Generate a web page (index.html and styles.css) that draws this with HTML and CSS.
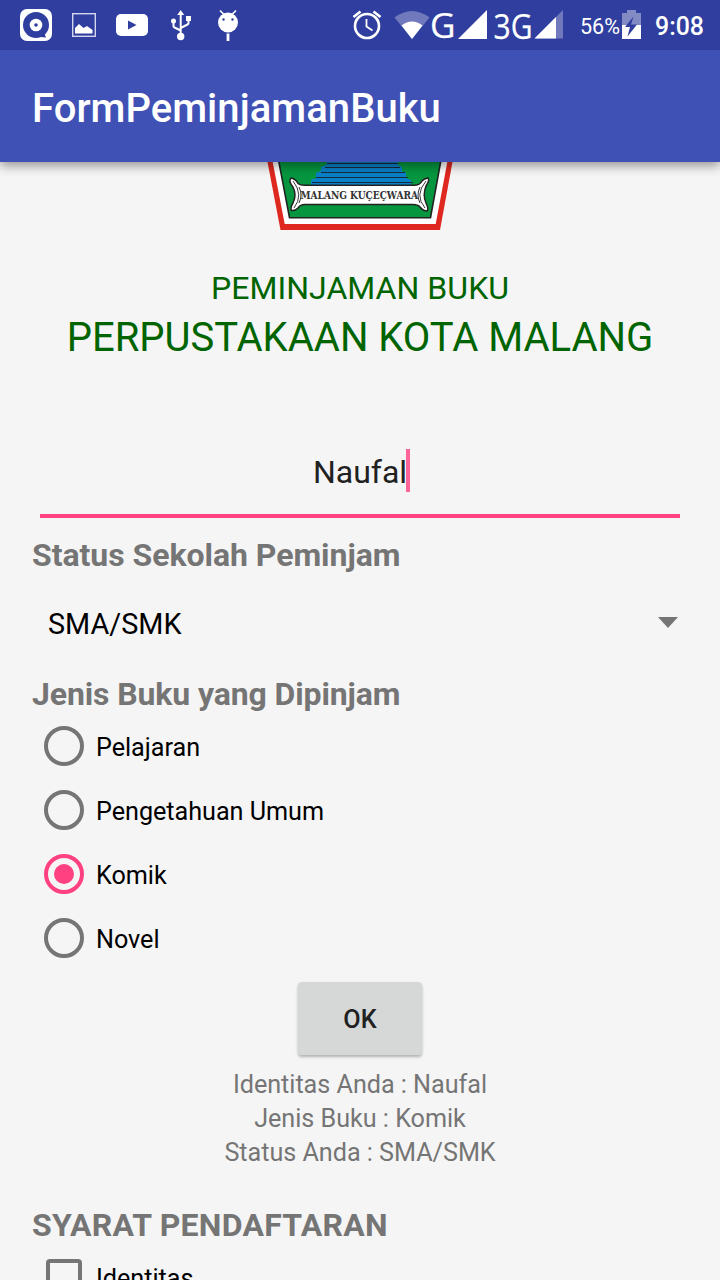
FILE: index.html
```html
<!DOCTYPE html>
<html lang="id">
<head>
<meta charset="utf-8">
<title>FormPeminjamanBuku</title>
<link rel="stylesheet" href="styles.css">
</head>
<body>
<div class="screen">
  <header class="status-bar">
    <svg class="status-left" width="250" height="50" viewBox="0 0 250 50">
      <rect x="20" y="9" width="32" height="32" rx="7" fill="#fff"/>
      <circle cx="36" cy="25" r="13" fill="#303f9f"/>
      <path d="M40 37l6 .5-2-5z" fill="#303f9f"/>
      <circle cx="36" cy="25" r="6.3" fill="#fff"/>
      <circle cx="36" cy="25" r="1.8" fill="#303f9f"/>
      <rect x="72.7" y="13.7" width="22.6" height="22.6" fill="none" stroke="#d3d6ed" stroke-width="1.4"/>
      <path d="M75 33.500V28l4-4 4.500 4 3.500-2 5.500 4v3.500z" fill="#fff"/>
      <rect x="116" y="14" width="32" height="22" rx="5" fill="#fff"/>
      <path d="M128 20.500v9l8.500-4.500z" fill="#303f9f"/>
      <g stroke="#fff" stroke-width="2" fill="none">
        <path d="M180.700 35V14M173.500 21v5q0 1 1 1.500l6.200 3M188.500 19v4q0 1-1 1.500l-6.800 3.500"/>
      </g>
      <path d="M180.700 10l3.500 5h-7z" fill="#fff"/>
      <circle cx="180.700" cy="36.500" r="3.700" fill="#fff"/>
      <circle cx="173.500" cy="21" r="2.500" fill="#fff"/>
      <rect x="186" y="16" width="5" height="5" fill="#fff"/>
      <path d="M220 10.500l4 4M236 10.500l-4 4" stroke="#fff" stroke-width="1.600"/>
      <circle cx="228" cy="22.500" r="10" fill="#fff"/>
      <circle cx="223.500" cy="19.500" r="1.200" fill="#303f9f"/>
      <circle cx="232.500" cy="19.500" r="1.200" fill="#303f9f"/>
      <path d="M228 33.500V41" stroke="#fff" stroke-width="2.800"/>
    </svg>
    <svg class="status-right" width="370" height="50" viewBox="350 0 370 50">
      <circle cx="367" cy="26" r="12" fill="none" stroke="#fff" stroke-width="2.600"/>
      <path d="M366.500 19v7.500l6 4" fill="none" stroke="#fff" stroke-width="1.800"/>
      <path d="M353.500 17l7-5.500M380.500 17l-7-5.500" stroke="#fff" stroke-width="2.600"/>
      <path d="M394.500 17.500Q412 4.500 429.500 17.500L412 39z" fill="#7079bc"/>
      <path d="M401.500 25.500Q412 17.500 422.500 25.500L412 39z" fill="#fff"/>
      <text class="net" x="430" y="38" textLength="25.500" lengthAdjust="spacingAndGlyphs">G</text>
      <path d="M458 39L487 10V39z" fill="#fff"/>
      <text class="net" x="493.500" y="39" textLength="39" lengthAdjust="spacingAndGlyphs">3G</text>
      <path d="M534.500 38.500L563 10V38.500z" fill="#7079bc"/>
      <path d="M534.500 38.500L556 17V38.500z" fill="#fff"/>
      <text class="percent" x="580" y="34" textLength="40" lengthAdjust="spacingAndGlyphs">56%</text>
      <path d="M622 13h5v-3h9v3h5v12h-19z" fill="#838bc5"/>
      <path d="M622 25h19v14h-19z" fill="#fff"/>
      <path d="M633.500 16.500L625 27h5l-2.500 9.500 9.500-12h-6z" fill="#303f9f"/>
      <text class="clock" x="655" y="35" textLength="49" lengthAdjust="spacingAndGlyphs">9:08</text>
    </svg>
  </header>
  <div class="app-bar"><h1 class="app-title">FormPeminjamanBuku</h1></div>
  <main class="form">
    <svg class="crest" width="200" height="68" viewBox="260 162 200 68">
      <path d="M267.500 162H452.500L440 230H280.500z" fill="#de2820"/>
      <path d="M272.700 162H447.300L435.700 224H284.700z" fill="#fff"/>
      <path d="M278.500 160H441L430.500 217.700H289.500z" fill="#06963f" stroke="#222" stroke-width="1.600"/>
      <path d="M327 162H398V165l4 2v4l4 2v5l5 2v5H311v-5l5-2v-5l5-2v-4l5-2z" fill="#0a80c8"/>
      <path d="M327 163.500H398M325 167.500H400M321 172.500H405M316 177.500H408M312 182.500H413" stroke="#172a3a" stroke-width="1"/>
      <path d="M291 178Q296 179 298 183.500Q300 185.300 305 185.300H414Q420 185.300 422 181Q424 178.500 428 178Q430 180 426 186Q422.500 195 426 203Q429 209 427 211Q423 211 420 207Q418 204.500 413 204.500H305Q300 204.500 298 208Q295 211 291.500 210.500Q290 208 293 203Q297 195 293 187Q288 181 291 178z" fill="#fff" stroke="#222" stroke-width="1.500"/>
      <path d="M293 181Q304 195 294 208M426 181Q414 195 425 208M299 187Q303 195 299 203M420 187Q416 195 420 203" fill="none" stroke="#222" stroke-width=".9"/>
      <text class="motto" x="300.500" y="199" textLength="117.500" lengthAdjust="spacingAndGlyphs">MALANG KUÇEÇWARA</text>
    </svg>
    <div class="heading heading-small">PEMINJAMAN BUKU</div>
    <div class="heading heading-large">PERPUSTAKAAN KOTA MALANG</div>
    <div class="name-field"><span class="name-value">Naufal</span><span class="caret"></span></div>
    <h2 class="label label-status">Status Sekolah Peminjam</h2>
    <div class="spinner"><span>SMA/SMK</span><svg width="20" height="11" viewBox="0 0 20 11"><path d="M0 0h20L10 11z" fill="#757575"/></svg></div>
    <h2 class="label label-kind">Jenis Buku yang Dipinjam</h2>
    <div class="options">
      <div class="option"><span class="radio"></span><span class="option-text">Pelajaran</span></div>
      <div class="option"><span class="radio"></span><span class="option-text">Pengetahuan Umum</span></div>
      <div class="option"><span class="radio checked"></span><span class="option-text">Komik</span></div>
      <div class="option"><span class="radio"></span><span class="option-text">Novel</span></div>
    </div>
    <button class="ok">OK</button>
    <div class="result">
      <div>Identitas Anda : Naufal</div>
      <div>Jenis Buku : Komik</div>
      <div>Status Anda : SMA/SMK</div>
    </div>
    <h2 class="label label-terms">SYARAT PENDAFTARAN</h2>
    <div class="option"><span class="checkbox"></span><span class="option-text">Identitas</span></div>
  </main>
</div>
</body>
</html>
```
FILE: styles.css
```css
* { box-sizing: border-box; }
body { margin: 0; font-family: Roboto, "Noto Sans", sans-serif; background: #f5f5f5; }
.screen { width: 720px; height: 1280px; overflow: hidden; display: flex; flex-direction: column; }
.status-bar { height: 50px; flex: none; background: #303f9f; display: flex; justify-content: space-between; position: relative; z-index: 2; }
.net { font: 35px "Open Sans", sans-serif; fill: #fff; stroke: #fff; stroke-width: .25px; }
.percent { font: 22px Roboto, sans-serif; fill: #fff; }
.clock { font: 500 26px Roboto, sans-serif; fill: #fff; }
.app-bar { height: 112px; flex: none; background: #3f51b5; padding: 0 32px; display: flex; align-items: center; position: relative; z-index: 1; box-shadow: 0 4px 10px rgba(0,0,0,.38); }
.app-title { margin: 0; padding-top: 4px; font-size: 40px; font-weight: 500; letter-spacing: .04px; color: #fff; }
.form { flex: none; display: flex; flex-direction: column; }
.crest { align-self: center; display: block; }
.motto { font: bold 11px "DejaVu Serif", serif; fill: #333; }
.heading { text-align: center; color: #006400; line-height: 49px; white-space: nowrap; }
.heading-small { margin-top: 34px; font-size: 32px; letter-spacing: .05px; }
.heading-large { font-size: 40px; }
.name-field { margin: 67px 40px 0; height: 89px; border-bottom: 4px solid #ff4081; display: flex; align-items: center; justify-content: center; font-size: 32px; color: #212121; }
.caret { width: 4px; height: 43px; margin: -2px -3px 0 -1px; background: #ff4081; opacity: .8; }
.label { margin: 19px 32px 0; font-size: 32px; line-height: 37px; font-weight: 700; color: #757575; }
.label-status { letter-spacing: -.04px; }
.spinner { height: 100px; padding: 0 42px 0 48px; display: flex; align-items: center; justify-content: space-between; font-size: 28.8px; color: #000; }
.spinner svg { margin-top: -3px; }
.label-kind { margin-top: 2px; letter-spacing: -.12px; }
.options { margin-top: 1px; }
.option { height: 64px; padding-left: 44px; display: flex; align-items: center; gap: 12px; font-size: 25.2px; letter-spacing: -.03px; color: #000; }
.option-text { padding-top: 2px; }
.radio { width: 40px; height: 40px; border: 4px solid #757575; border-radius: 50%; display: flex; align-items: center; justify-content: center; }
.checked { border-color: #ff4081; }
.checked::after { content: ""; width: 20px; height: 20px; border-radius: 50%; background: #ff4081; }
.ok { align-self: center; width: 124px; height: 73px; margin-top: 12px; padding: 2px 0 0; border: 0; border-radius: 4px; background: #d6d7d7; box-shadow: 0 2px 3px rgba(0,0,0,.28); font: 500 25.2px Roboto, sans-serif; color: #212121; }
.result { margin-top: 13px; text-align: center; font-size: 25.2px; letter-spacing: -.03px; line-height: 34px; color: #757575; }
.label-terms { margin-top: 37px; margin-bottom: 1px; letter-spacing: .25px; }
.checkbox { width: 36px; height: 36px; margin: 0 2px; border: 4px solid #757575; border-radius: 4px; }
```
